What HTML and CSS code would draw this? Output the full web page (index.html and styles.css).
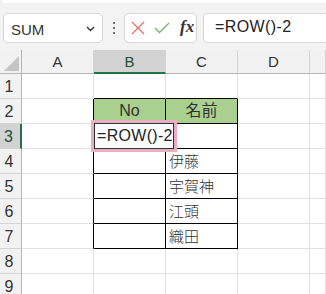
FILE: index.html
```html
<!DOCTYPE html>
<html lang="ja">
<head>
    <meta charset="UTF-8">
    <title>ROW関数</title>
    <link rel="stylesheet" href="styles.css">
</head>
<body>
    <div class="toolbar">
        <div class="ribbon-edge"></div>
        <div class="formula-bar">
            <div class="name-box">
                <span>SUM</span>
                <svg class="chevron" width="9" height="6" viewBox="0 0 9 6">
                    <path d="M1 1 L4.5 4.5 L8 1" fill="none" stroke="#333" stroke-width="1.4"/>
                </svg>
            </div>
            <div class="dots"><i></i><i></i><i></i></div>
            <div class="fx-buttons">
                <svg width="14" height="14" viewBox="0 0 14 14">
                    <path d="M1 1 L13 13 M13 1 L1 13" stroke="#e07070" stroke-width="1.3"/>
                </svg>
                <svg width="16" height="12" viewBox="0 0 16 12">
                    <path d="M1 6 L5.5 10.5 L15 1" fill="none" stroke="#6cb56c" stroke-width="1.3"/>
                </svg>
                <span class="fx">fx</span>
            </div>
            <div class="formula-input">=ROW()-2</div>
        </div>
    </div>

    <div class="sheet">
        <div class="corner">
            <svg width="22" height="24" viewBox="0 0 22 24">
                <path d="M4 21 L19 21 L19 6 Z" fill="#c4c4c4"/>
            </svg>
        </div>
        <div class="col-head">A</div>
        <div class="col-head selected">B</div>
        <div class="col-head">C</div>
        <div class="col-head">D</div>
        <div class="col-head"></div>

        <div class="row-head">1</div>
        <div class="cell"></div>
        <div class="cell top-edge"></div>
        <div class="cell top-edge"></div>
        <div class="cell"></div>
        <div class="cell"></div>

        <div class="row-head">2</div>
        <div class="cell left-edge"></div>
        <div class="cell boxed head">No</div>
        <div class="cell boxed head">名前</div>
        <div class="cell"></div>
        <div class="cell"></div>

        <div class="row-head selected">3</div>
        <div class="cell left-edge"></div>
        <div class="cell boxed"></div>
        <div class="cell boxed"></div>
        <div class="cell"></div>
        <div class="cell"></div>

        <div class="row-head">4</div>
        <div class="cell left-edge"></div>
        <div class="cell boxed"></div>
        <div class="cell boxed name">伊藤</div>
        <div class="cell"></div>
        <div class="cell"></div>

        <div class="row-head">5</div>
        <div class="cell left-edge"></div>
        <div class="cell boxed"></div>
        <div class="cell boxed name">宇賀神</div>
        <div class="cell"></div>
        <div class="cell"></div>

        <div class="row-head">6</div>
        <div class="cell left-edge"></div>
        <div class="cell boxed"></div>
        <div class="cell boxed name">江頭</div>
        <div class="cell"></div>
        <div class="cell"></div>

        <div class="row-head">7</div>
        <div class="cell left-edge"></div>
        <div class="cell boxed"></div>
        <div class="cell boxed name">織田</div>
        <div class="cell"></div>
        <div class="cell"></div>

        <div class="row-head">8</div>
        <div class="cell"></div>
        <div class="cell"></div>
        <div class="cell"></div>
        <div class="cell"></div>
        <div class="cell"></div>

        <div class="row-head">9</div>
        <div class="cell"></div>
        <div class="cell"></div>
        <div class="cell"></div>
        <div class="cell"></div>
        <div class="cell"></div>

        <!-- in-cell editor over B3 -->
        <div class="cell-editor">=ROW()-2</div>
    </div>
</body>
</html>
```

FILE: styles.css
```css
body {
    margin: 0;
    background: #ffffff;
    font-family: 'Liberation Sans', Arial, 'Noto Sans CJK JP', sans-serif;
    color: #262626;
    overflow: hidden;
}

.toolbar {
    background: #f3f3f3;
    height: 50px;
}

.ribbon-edge {
    height: 3px;
    margin: 0 0 0 3px;
    background: #ffffff;
    border-radius: 0 0 0 6px;
}

.formula-bar {
    display: flex;
    align-items: center;
    padding: 10px 0 0 3px;
    height: 30px;
}

.name-box {
    box-sizing: border-box;
    width: 100px;
    height: 30px;
    background: #ffffff;
    border: 1px solid #d6d6d6;
    border-radius: 5px;
    display: flex;
    align-items: center;
    justify-content: space-between;
    padding: 3px 7px 0 7px;
    font-size: 15px;
    color: #333;
}

.chevron {
    margin-top: -2px;
}

.dots {
    width: 21px;
    display: flex;
    flex-direction: column;
    align-items: center;
    gap: 3px;
}

.dots i {
    width: 2px;
    height: 2px;
    background: #444;
    border-radius: 1px;
}

.fx-buttons {
    box-sizing: border-box;
    width: 73px;
    height: 30px;
    background: #ffffff;
    border: 1px solid #d6d6d6;
    border-radius: 5px;
    display: flex;
    align-items: center;
    gap: 9px;
    padding-left: 6px;
}

.fx {
    font-family: 'Liberation Serif', 'Times New Roman', serif;
    font-style: italic;
    font-weight: bold;
    font-size: 17px;
    color: #333;
    margin-top: -3px;
    margin-left: 1px;
}

.formula-input {
    box-sizing: border-box;
    flex: 1;
    height: 30px;
    margin-left: 6px;
    background: #ffffff;
    border: 1px solid #d6d6d6;
    border-right: none;
    border-radius: 5px 0 0 5px;
    padding: 4px 0 0 11px;
    font-size: 16px;
    letter-spacing: 0.4px;
    color: #222;
}

.sheet {
    position: relative;
    display: grid;
    grid-template-columns: 22px 72px 72px 72px 72px 16px;
    grid-template-rows: 24px repeat(9, 25px);
}

.corner {
    background: #f2f2f2;
    border-right: 1px solid #b5b5b5;
    border-bottom: 1px solid #b5b5b5;
    box-sizing: border-box;
}

.corner svg {
    display: block;
}

.col-head {
    box-sizing: border-box;
    background: #f2f2f2;
    border-right: 1px solid #d4d4d4;
    border-bottom: 1px solid #b5b5b5;
    text-align: center;
    font-size: 15px;
    line-height: 24px;
    color: #333;
}

.col-head.selected {
    background: #d3d3d3;
    border-bottom: 2px solid #217346;
    color: #1f5136;
    line-height: 23px;
}

.row-head {
    box-sizing: border-box;
    background: #f2f2f2;
    border-right: 1px solid #b5b5b5;
    border-bottom: 1px solid #d4d4d4;
    font-size: 16px;
    line-height: 25px;
    padding-right: 3px;
    text-align: center;
    color: #333;
}

.row-head.selected {
    background: #d3d3d3;
    border-right: 2px solid #217346;
    color: #1f5136;
}

.cell {
    box-sizing: border-box;
    border-right: 1px solid #e1e1e1;
    border-bottom: 1px solid #e1e1e1;
    font-size: 15px;
    line-height: 24px;
    color: #333;
}

.cell.top-edge {
    border-bottom-color: #000000;
}

.cell.left-edge {
    border-right-color: #000000;
}

.cell.boxed {
    border-right-color: #000000;
    border-bottom-color: #000000;
}

.cell.head {
    background: #a9d08e;
    text-align: center;
    font-size: 16px;
}

.cell.name {
    padding-left: 3px;
    font-family: 'Noto Sans CJK JP', sans-serif;
    font-weight: 300;
    font-size: 15px;
}

.cell-editor {
    position: absolute;
    left: 91px;
    top: 70px;
    width: 86px;
    height: 32px;
    box-sizing: border-box;
    border: 3px solid #f0aac4;
    outline: 1px solid #1d3a2a;
    outline-offset: -4px;
    background: #ffffff;
    padding: 0 0 0 3px;
    font-size: 16px;
    line-height: 26px;
    letter-spacing: 0.3px;
    color: #222;
    white-space: nowrap;
}
```
